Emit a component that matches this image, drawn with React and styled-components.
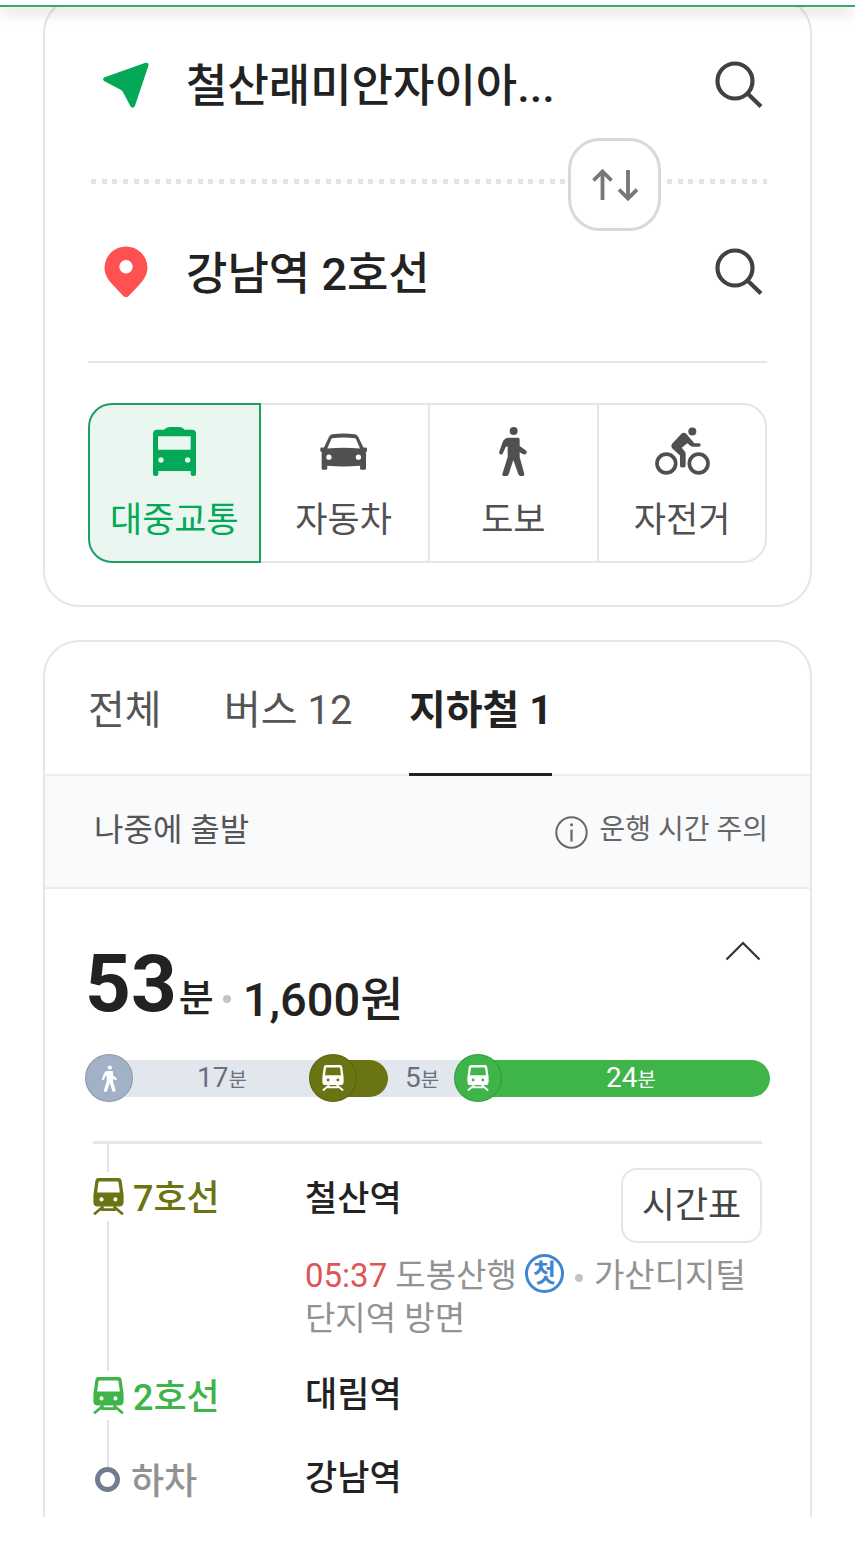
import React from "react";
import styled, { createGlobalStyle } from "styled-components";

const GlobalStyle = createGlobalStyle`
  *, *::before, *::after { box-sizing: border-box; }
  body {
    margin: 0;
    background: #fff;
    color: #222;
    font-family: Roboto, "Noto Sans CJK KR", sans-serif;
  }
  button {
    margin: 0;
    padding: 0;
    border: 0;
    background: none;
    color: inherit;
    font: inherit;
    cursor: pointer;
  }
  svg { display: block; flex: none; }
  h1, h2, p, ol { margin: 0; padding: 0; }
  ol { list-style: none; }
`;

/* ---------- icons ---------- */

const DepartIcon = () => (
  <svg width="46" height="46" viewBox="0 0 46 46" fill="#03a957" aria-hidden="true">
    <path d="M1.6 15.2 42.5.8q3.6-.6 3 2.8L32 43.800q-2.200 3.600-4.600.5L20.200 30.500q-.8-2.200-3-3L1.500 19.300q-3-2.200.1-4.100z" />
  </svg>
);

const PinIcon = () => (
  <svg width="44" height="52" viewBox="0 0 44 52" fill="#ff5052" fillRule="evenodd" aria-hidden="true">
    <path d="M22 .5A21.500 21.500 0 0 1 43.500 21.500C43.500 28 40.500 33 36 38L24.500 50.200Q22 52 19.500 50.200L8 38C3.500 33 .5 28 .5 21.500A21.500 21.500 0 0 1 22 .5zM22 14a6.700 6.700 0 1 0 0 13.400A6.700 6.700 0 0 0 22 14z" />
  </svg>
);

const SearchIcon = () => (
  <svg width="48" height="48" viewBox="0 0 48 48" fill="none" stroke="#414143" strokeWidth="4.200" aria-hidden="true">
    <circle cx="20" cy="20" r="17.500" />
    <path d="M32.500 32.500 46 45.500" />
  </svg>
);

const SwapIcon = () => (
  <svg width="46" height="34" viewBox="0 0 46 34" fill="none" stroke="#777" strokeWidth="3.800" aria-hidden="true">
    <path d="M10.500 32V3M1.500 12.500l9-9 9 9M36 2v29M27 21.500l9 9 9-9" />
  </svg>
);

const BusIcon = () => (
  <svg width="43" height="49" viewBox="0 0 129 147" fill="currentColor" fillRule="evenodd" aria-hidden="true">
    <path d="M33 8Q40 1 50 0H79Q90 1 95 8H117Q129 8 129 20V141Q129 147 123 147H119Q113 147 113 141V132H16V141Q16 147 10 147H6Q0 147 0 141V20Q0 8 12 8zM15 28V68H113V28zM24 91a8 8 0 1 0 0 16 8 8 0 0 0 0-16zM104 91a8 8 0 1 0 0 16 8 8 0 0 0 0-16z" />
  </svg>
);

const CarIcon = () => (
  <svg width="47" height="37" viewBox="0 0 142 110" fill="currentColor" fillRule="evenodd" aria-hidden="true">
    <path d="M27 11Q30 4 38 3Q71-2 105 3Q112 4 116 11L131 43H138Q142 43 142 47V53Q142 57 138 57Q140 63 139 70V106Q139 110 135 110H126Q121 110 121 106V98Q71 102 22 98V106Q22 110 17 110H9Q5 110 5 106V70Q4 63 6 57Q1 57 1 53V47Q1 43 5 43H12zM37 15Q34 16 33 20L22 46Q71 41 121 46L110 20Q109 16 106 15Q71 11 37 15zM27 64a8 8 0 1 0 0 16 8 8 0 0 0 0-16zM116 64a8 8 0 1 0 0 16 8 8 0 0 0 0-16z" />
  </svg>
);

const WalkIcon = ({ height = 49 }) => (
  <svg width={Math.round((height * 84) / 147)} height={height} viewBox="0 0 84 147" fill="currentColor" aria-hidden="true">
    <circle cx="44" cy="12" r="12" />
    <path d="M27 32H57Q62 32 62 38V57L80 70Q86 75 81 80Q77 84 71 81L62 76V90L76 141Q77 147 71 147H64Q60 147 58 142L43 99L29 142Q28 147 23 147H14Q9 147 10 141L26 90V58L20 60L12 78Q10 84 4 82Q-1 80 1 74L10 48Q14 34 27 32Z" />
  </svg>
);

const BikeIcon = () => (
  <svg width="55" height="48" viewBox="0 0 165 143" fill="currentColor" aria-hidden="true">
    <g fill="none" stroke="currentColor" strokeWidth="11">
      <circle cx="34" cy="109" r="28" />
      <circle cx="131" cy="109" r="28" />
    </g>
    <circle cx="112" cy="13" r="12" />
    <path d="M80 19Q86 14 93 19L118 48H132Q137 48 137 53Q137 59 132 59H114Q109 59 106 56L97 48L80 62L89 72Q92 75 92 80V115Q92 121 87 121H80Q75 121 75 115V85L52 64Q46 56 52 49Z" />
  </svg>
);

const TrainIcon = ({ width = 30 }) => (
  <svg width={width} height={Math.round((width * 109) / 91)} viewBox="0 0 91 109" aria-hidden="true">
    <path
      fill="currentColor"
      fillRule="evenodd"
      d="M16 0H75Q82 0 84 7L90 50V70Q90 84 78 84H13Q1 84 1 70V50L7 7Q9 0 16 0zM19 10Q17 10 16 13L12 43H79L75 13Q74 10 72 10zM25 57a6 6 0 1 0 0 12 6 6 0 0 0 0-12zM66 57a6 6 0 1 0 0 12 6 6 0 0 0 0-12z"
    />
    <path fill="none" stroke="currentColor" strokeWidth="8" d="M30 84 3 107M61 84 88 107M24 93H67" />
  </svg>
);

const InfoIcon = () => (
  <svg width="33" height="33" viewBox="0 0 33 33" fill="none" stroke="#666" aria-hidden="true">
    <circle cx="16.500" cy="16.500" r="15.200" strokeWidth="2" />
    <path d="M16.500 13.500V25.500" strokeWidth="2.200" />
    <circle cx="16.500" cy="8.700" r="1.500" fill="#666" stroke="none" />
  </svg>
);

const ChevronUpIcon = () => (
  <svg width="36" height="20" viewBox="0 0 36 20" fill="none" stroke="#333" strokeWidth="2.200" aria-hidden="true">
    <path d="M1.500 18.500 18 2l16.500 16.500" />
  </svg>
);

/* ---------- layout ---------- */

const TopBar = styled.header`
  position: relative;
  z-index: 2;
  height: 7px;
  background: #fff;
  border-bottom: 2px solid #2fae68;
  box-shadow: 0 6px 14px -2px rgba(0, 0, 0, 0.36);
`;

const Page = styled.main`
  display: flex;
  flex-direction: column;
  gap: 33px;
  margin-top: -10px;
  padding: 0 43px;
`;

const Card = styled.section`
  border: 2px solid #e6e6e6;
  border-radius: 36px;
  background: #fff;
`;

const SearchCard = styled(Card)`
  padding: 0 43px 42px;
`;

const ResultCard = styled(Card)`
  border-bottom: 0;
  border-radius: 36px 36px 0 0;
`;

const PlaceRow = styled.div`
  display: grid;
  grid-template-columns: 76px 1fr 48px;
  align-items: center;
  height: ${(p) => p.$height}px;
  padding: 0 4px ${(p) => p.$bottom}px 0;
`;

const PlaceMark = styled.span`
  display: flex;
  justify-content: center;
`;

const PlaceName = styled.button`
  margin-left: 22px;
  padding-top: 5px;
  overflow: hidden;
  white-space: nowrap;
  text-align: left;
  font-size: 45px;
  font-weight: 500;
  line-height: 64px;
`;

const IconButton = styled.button`
  display: flex;
  align-items: center;
  justify-content: center;
`;

const DottedDivider = styled.div`
  position: relative;
  height: 5px;
  margin-left: 3px;
  background: repeating-linear-gradient(
    to right,
    #e4e4e4 0 5px, transparent 5px 11px,
    #e4e4e4 11px 16px, transparent 16px 21px,
    #e4e4e4 21px 26px, transparent 26px 32px
  );
`;

const SwapButton = styled(IconButton)`
  position: absolute;
  right: 106px;
  top: -41px;
  width: 93px;
  height: 93px;
  border: 3px solid #d9d9d9;
  border-radius: 32px;
  background: #fff;
`;

const Rule = styled.hr`
  height: 2px;
  margin: 0;
  border: 0;
  background: #e6e6e6;
`;

const ModeGroup = styled.nav`
  display: grid;
  grid-template-columns: repeat(4, 1fr);
  height: 160px;
  margin-top: 40px;
`;

const ModeButton = styled.button`
  display: flex;
  flex-direction: column;
  align-items: center;
  gap: 20px;
  padding-top: 21px;
  border: 2px solid #e6e6e6;
  border-right-width: 0;
  color: #505052;
  font-size: 35px;
  line-height: 50px;
  &:first-child {
    border-radius: 24px 0 0 24px;
  }
  &:last-child {
    border-right-width: 2px;
    border-radius: 0 24px 24px 0;
  }
  &[aria-pressed="true"] {
    position: relative;
    margin-right: -3px;
    border-color: #1f9e62;
    border-right-width: 2px;
    background: #e9f7f0;
    color: #03a957;
  }
`;

const ModeIcon = styled.span`
  display: flex;
  align-items: center;
  height: 50px;
`;

const Tabs = styled.nav`
  display: grid;
  grid-template-columns: 136px 185px max-content;
  justify-items: start;
  height: 134px;
  padding-left: 43px;
  border-bottom: 2px solid #ededef;
`;

const Tab = styled.button`
  height: 134px;
  padding-top: 6px;
  border-bottom: 3px solid ${(p) => (p.$active ? "#222" : "transparent")};
  color: ${(p) => (p.$active ? "#222" : "#555")};
  font-size: 40px;
  font-weight: ${(p) => (p.$active ? 700 : 400)};
  line-height: 60px;
  white-space: nowrap;
`;

const NoticeBar = styled.div`
  display: flex;
  align-items: center;
  justify-content: space-between;
  height: 113px;
  padding: 0 42px 3px 49px;
  border-bottom: 2px solid #ededef;
  background: #f9fafc;
  color: #555;
  font-size: 32px;
  line-height: 48px;
`;

const Notice = styled.button`
  display: flex;
  align-items: center;
  gap: 12px;
  color: #666;
  font-size: 28px;
  svg { margin-top: 5px; }
`;

const Summary = styled.div`
  display: flex;
  align-items: flex-start;
  justify-content: space-between;
  height: 165px;
  padding: 49px 49px 0 40px;
`;

const Totals = styled.h2`
  display: flex;
  align-items: baseline;
  height: 92px;
  font-weight: 700;
  line-height: 92px;
`;

const TotalMinutes = styled.span`
  font-size: 80px;
`;

const MinuteUnit = styled.span`
  margin-left: 2px;
  font-size: 38px;
  font-weight: 500;
  line-height: 48px;
`;

const Fare = styled.span`
  align-self: flex-end;
  font-size: 47px;
  font-weight: 500;
  line-height: 60px;
`;

const Dot = styled.span`
  display: inline-block;
  align-self: center;
  width: 8px;
  height: 8px;
  margin: ${(p) => p.$margin || "0"};
  border-radius: 50%;
  background: #c4c4c4;
  vertical-align: middle;
`;

const ToggleButton = styled(IconButton)`
  margin-top: 3px;
`;

const Timeline = styled.ol`
  display: flex;
  align-items: center;
  height: 48px;
  margin: 0 40px;
`;

/* The track starts under the middle of the first badge and stops under the last one. */
const trackFor = {
  start: "linear-gradient(to right, transparent 24px, #e2e6ed 24px)",
  middle: "#e2e6ed",
  end: "linear-gradient(to right, #e2e6ed 24px, transparent 24px)",
};

const Leg = styled.li`
  display: flex;
  align-items: center;
  flex: ${(p) => p.$share} 1 0;
  min-width: 0;
  height: 37px;
  background: ${(p) => trackFor[p.$track]};
`;

const LegFill = styled.span`
  display: flex;
  align-items: center;
  flex: 1;
  height: 37px;
  margin-left: ${(p) => (p.$line ? "-24px" : "0")};
  padding: ${(p) => (p.$line ? "2px 10px 0 24px" : "2px 0 0 2px")};
  justify-content: center;
  border-radius: 0 19px 19px 0;
  background: ${(p) => p.$line || "transparent"};
  color: ${(p) => (p.$line ? "#fff" : "#6b7080")};
  font-size: 28px;
  line-height: 37px;
  white-space: nowrap;
  small { font-size: 20px; }
`;

const LegBadge = styled.span`
  position: relative;
  display: flex;
  align-items: center;
  justify-content: center;
  flex: none;
  width: 48px;
  height: 48px;
  border: 1px solid rgba(0, 0, 0, 0.14);
  border-radius: 50%;
  background: ${(p) => p.$color};
  color: #fff;
`;

const Route = styled.div`
  margin: 39px 48px 0;
  border-top: 3px solid #e6e6e6;
`;

const Lead = styled.div`
  width: 2px;
  height: 28px;
  margin-left: 14px;
  background: #e4e4e6;
`;

const Step = styled.li`
  display: grid;
  grid-template-columns: 212px 1fr;
  min-height: ${(p) => p.$height}px;
`;

const Rail = styled.div`
  display: flex;
  flex-direction: column;
`;

const LineName = styled.div`
  display: flex;
  align-items: center;
  gap: 9px;
  height: ${(p) => (p.$compact ? 24 : 49)}px;
  color: ${(p) => p.$color};
  font-size: 36px;
  font-weight: 500;
  line-height: 48px;
  white-space: nowrap;
`;

const LineLabel = styled.span`
  padding-top: 5px;
`;

const Connector = styled(Lead)`
  flex: 1;
  height: auto;
`;

const StopRing = styled.span`
  width: 25px;
  height: 25px;
  margin: 0 2px;
  border: 5px solid #727c90;
  border-radius: 50%;
`;

const StationHead = styled.div`
  display: flex;
  align-items: flex-start;
  justify-content: space-between;
  min-height: ${(p) => (p.$tall ? 80 : 48)}px;
`;

const Station = styled.strong`
  font-size: 35px;
  font-weight: 500;
  line-height: ${(p) => p.$line}px;
`;

const TimetableButton = styled.button`
  width: 141px;
  height: 75px;
  margin-top: -4px;
  border: 2px solid #e6e6e6;
  border-radius: 16px;
  color: #444;
  font-size: 36px;
  line-height: 48px;
`;

const Detail = styled.p`
  margin-top: 2px;
  color: #929292;
  font-size: 33px;
  line-height: 43px;
  time { color: #dd5555; }
`;

const FirstTrain = styled.span`
  display: inline-flex;
  align-items: center;
  justify-content: center;
  width: 39px;
  height: 39px;
  border: 3px solid #3f86d2;
  border-radius: 50%;
  color: #3f86d2;
  font-size: 25px;
  font-weight: 700;
  line-height: 30px;
  vertical-align: top;
`;

const GRAY = "#a3b1c6";
const LINE7 = "#6a7413";
const LINE2 = "#3eb449";

const modes = [
  { label: "대중교통", icon: <BusIcon />, active: true },
  { label: "자동차", icon: <CarIcon /> },
  { label: "도보", icon: <WalkIcon /> },
  { label: "자전거", icon: <BikeIcon /> },
];

export default function App() {
  return (
    <>
      <GlobalStyle />
      <TopBar />
      <Page>
        <SearchCard>
          <PlaceRow $height={180} $bottom={9}>
            <PlaceMark><DepartIcon /></PlaceMark>
            <PlaceName type="button">철산래미안자이아...</PlaceName>
            <IconButton type="button" aria-label="출발지 검색"><SearchIcon /></IconButton>
          </PlaceRow>
          <DottedDivider>
            <SwapButton type="button" aria-label="출발지와 도착지 바꾸기"><SwapIcon /></SwapButton>
          </DottedDivider>
          <PlaceRow $height={177} $bottom={1}>
            <PlaceMark><PinIcon /></PlaceMark>
            <PlaceName type="button">강남역 2호선</PlaceName>
            <IconButton type="button" aria-label="도착지 검색"><SearchIcon /></IconButton>
          </PlaceRow>
          <Rule />
          <ModeGroup>
            {modes.map((m) => (
              <ModeButton key={m.label} type="button" aria-pressed={Boolean(m.active)}>
                <ModeIcon>{m.icon}</ModeIcon>
                {m.label}
              </ModeButton>
            ))}
          </ModeGroup>
        </SearchCard>

        <ResultCard>
          <Tabs>
            <Tab type="button">전체</Tab>
            <Tab type="button">버스 12</Tab>
            <Tab type="button" $active>지하철 1</Tab>
          </Tabs>
          <NoticeBar>
            <span>나중에 출발</span>
            <Notice type="button"><InfoIcon />운행 시간 주의</Notice>
          </NoticeBar>

          <Summary>
            <Totals>
              <TotalMinutes>53</TotalMinutes>
              <MinuteUnit>분</MinuteUnit>
              <Dot $margin="30px 12px 0 9px" />
              <Fare>1,600원</Fare>
            </Totals>
            <ToggleButton type="button" aria-label="접기"><ChevronUpIcon /></ToggleButton>
          </Summary>

          <Timeline>
            <Leg $share={224} $track="start">
              <LegBadge $color={GRAY}><WalkIcon height={27} /></LegBadge>
              <LegFill><span>17<small>분</small></span></LegFill>
            </Leg>
            <Leg $share={79} $track="middle">
              <LegBadge $color={LINE7}><TrainIcon width={22} /></LegBadge>
              <LegFill $line={LINE7} />
            </Leg>
            <Leg $share={66} $track="middle">
              <LegFill><span>5<small>분</small></span></LegFill>
            </Leg>
            <Leg $share={316} $track="end">
              <LegBadge $color={LINE2}><TrainIcon width={22} /></LegBadge>
              <LegFill $line={LINE2}><span>24<small>분</small></span></LegFill>
            </Leg>
          </Timeline>

          <Route>
            <Lead />
            <ol>
              <Step $height={199}>
                <Rail>
                  <LineName $color={LINE7}><TrainIcon width={31} /><LineLabel>7호선</LineLabel></LineName>
                  <Connector />
                </Rail>
                <div>
                  <StationHead $tall>
                    <Station $line={56}>철산역</Station>
                    <TimetableButton type="button">시간표</TimetableButton>
                  </StationHead>
                  <Detail>
                    <time>05:37</time> 도봉산행 <FirstTrain>첫</FirstTrain>
                    <Dot $margin="0 11px" /><span>가산디지털</span><span>단지역 방면</span>
                  </Detail>
                </div>
              </Step>
              <Step $height={96}>
                <Rail>
                  <LineName $color={LINE2}><TrainIcon width={31} /><LineLabel>2호선</LineLabel></LineName>
                  <Connector />
                </Rail>
                <StationHead><Station $line={50}>대림역</Station></StationHead>
              </Step>
              <Step $height={50}>
                <Rail>
                  <LineName $compact $color="#929292"><StopRing /><LineLabel>하차</LineLabel></LineName>
                </Rail>
                <StationHead><Station $line={24}>강남역</Station></StationHead>
              </Step>
            </ol>
          </Route>
        </ResultCard>
      </Page>
    </>
  );
}
